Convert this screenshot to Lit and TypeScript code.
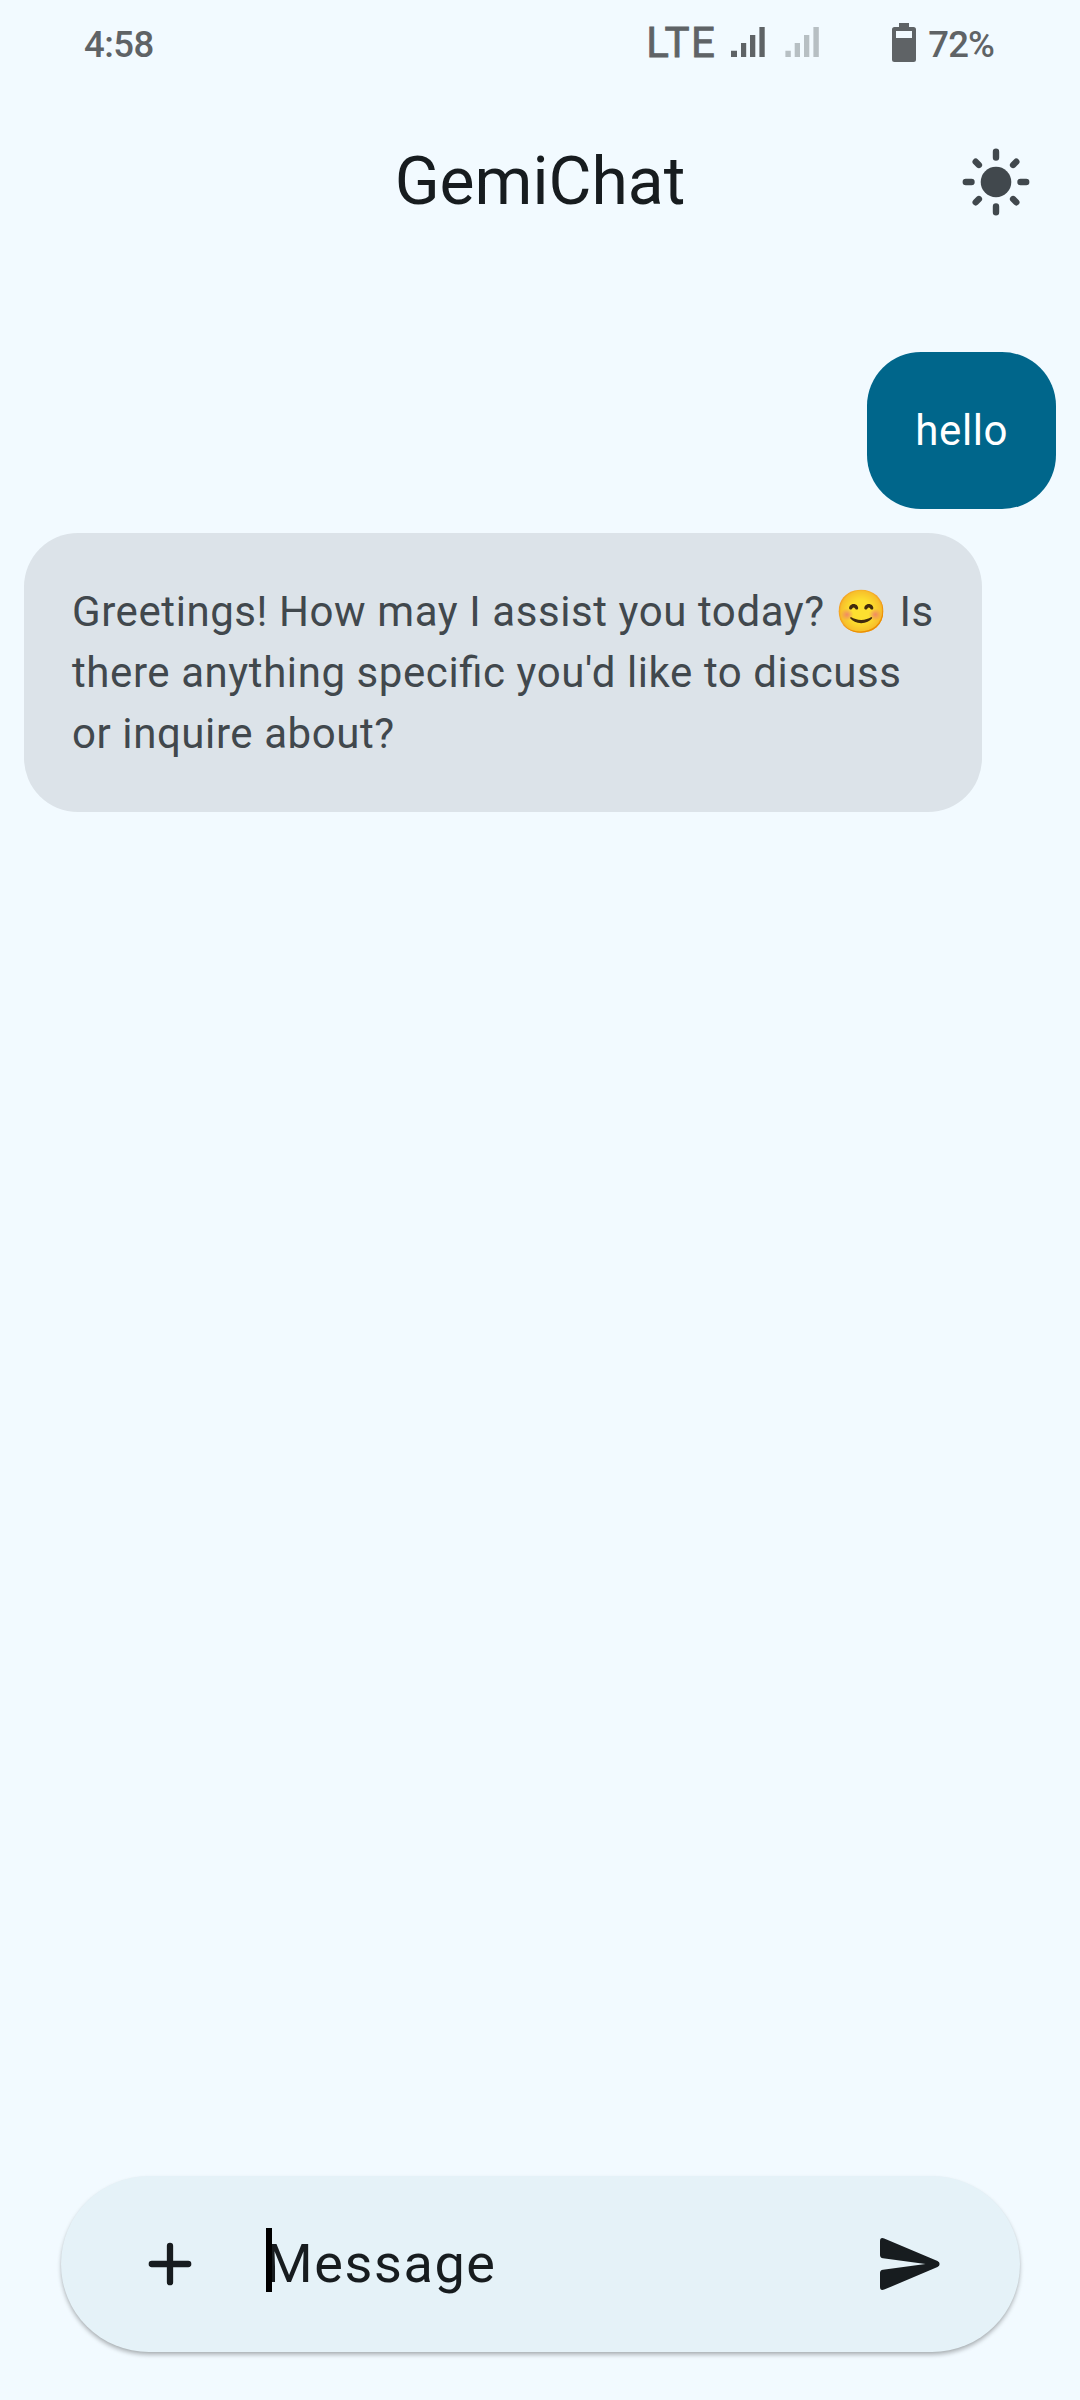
import { LitElement, html, css } from "lit";
import { customElement, property } from "lit/decorators.js";

@customElement("status-bar")
class StatusBar extends LitElement {
  static styles = css`
    :host {
      display: flex;
      height: 89px;
      padding: 0 86px 0 84px;
      justify-content: space-between;
      color: #5f6366;
      font-size: 36.5px;
      font-weight: 500;
      line-height: 89px;
    }
    .right {
      display: flex;
    }
    .time {
      letter-spacing: -0.5px;
    }
    .network {
      font-size: 42px;
      font-weight: 400;
      line-height: 85px;
      letter-spacing: 1.4px;
      -webkit-text-stroke: 0.8px #5f6366;
    }
    .icons {
      display: block;
      width: 201px;
      height: 89px;
      margin-left: 10px;
    }
    .level {
      margin-left: 1px;
      letter-spacing: -0.9px;
    }
  `;

  render() {
    return html`
      <span class="time">4:58</span>
      <div class="right">
        <span class="network">LTE</span>
        <svg class="icons" viewBox="726 0 201 89" fill="#5f6366">
          <path d="M731 50.7h6V57h-6zM741 43h5.2v14H741zM750 35h5.3v22H750zM759.4 27h5.3v30h-5.3z" />
          <path fill="#b7bfc3" d="M785.4 50.7h5.4V57h-5.4zM794.7 43h5.3v14h-5.3zM804 35h5.3v22H804zM813.4 27h5.4v30h-5.4z" />
          <path fill-rule="evenodd" d="M899 23h10v4h4.500q2.500 0 2.500 2.500v30q0 2.500-2.500 2.500h-19q-2.500 0-2.500-2.500v-30q0-2.500 2.500-2.500H899zM896 31v7h16v-7z" />
        </svg>
        <span class="level">72%</span>
      </div>
    `;
  }
}

@customElement("chat-header")
class ChatHeader extends LitElement {
  static styles = css`
    :host {
      display: grid;
      grid-template-columns: 1fr auto 1fr;
      align-items: center;
      height: 185px;
      padding: 0 44.5px;
      color: #171c1f;
    }
    .title {
      grid-column: 2;
      font-size: 66px;
      line-height: 84px;
    }
    .theme {
      display: block;
      justify-self: end;
      width: 80px;
      height: 80px;
    }
  `;

  render() {
    return html`
      <span class="title">GemiChat</span>
      <svg class="theme" viewBox="-40 -40 80 80" stroke="#41484d" stroke-width="6.400" stroke-linecap="round">
        <circle r="15.300" fill="#41484d" stroke="none" />
        <path d="M0-30.200v5.700M0 30.200v-5.700M-30.200 0h5.700M30.200 0h-5.700M-20.300-20.300l3.200 3.200M20.300-20.300l-3.200 3.200M-20.300 20.300l3.200-3.200M20.300 20.300l-3.200-3.200" />
      </svg>
    `;
  }
}

@customElement("chat-bubble")
class ChatBubble extends LitElement {
  static styles = css`
    :host {
      display: block;
      box-sizing: border-box;
      max-width: 970px;
      padding: 48px;
      border-radius: 54px;
      background: #dce3e9;
      color: #41484d;
      align-self: flex-start;
      font-size: 42px;
      line-height: 61px;
      letter-spacing: 0.58px;
      font-feature-settings: "liga" 1;
      white-space: pre-line;
    }
    :host([own]) {
      align-self: flex-end;
      background: #00668b;
      color: #ffffff;
    }
  `;

  @property({ type: Boolean, reflect: true }) own = false;

  render() {
    return html`<slot></slot>`;
  }
}

@customElement("message-input")
class MessageInput extends LitElement {
  static styles = css`
    :host {
      display: flex;
      align-items: center;
      box-sizing: border-box;
      height: 176px;
      margin: 0 60.5px 48px 60.5px;
      padding: 0 69.5px 0 79px;
      border-radius: 88px;
      background: #e5f2f8;
      color: #171c1f;
      box-shadow: 0 3px 4px rgba(0, 0, 0, 0.26), 0 1px 2px rgba(0, 0, 0, 0.05);
    }
    .add {
      width: 60px;
      height: 60px;
    }
    .field {
      position: relative;
      flex: 1;
      margin-left: 66px;
      font-size: 54px;
      line-height: 64px;
      letter-spacing: 1.6px;
    }
    .caret {
      position: absolute;
      left: 0;
      top: -4px;
      width: 6px;
      height: 64px;
      background: #000000;
    }
    .send {
      width: 80px;
      height: 80px;
    }
  `;

  render() {
    return html`
      <svg class="add" viewBox="-30 -30 60 60" stroke="#171c1f" stroke-width="6.300" stroke-linecap="round">
        <path d="M-18.200 0h36.400M0-18.200v36.400" />
      </svg>
      <div class="field"><span class="caret"></span>Message</div>
      <svg class="send" viewBox="870 2224.500 80 80" fill="#171c1f">
        <path d="M880 2241.700Q880 2237.400 884.200 2238.900L937.500 2261.400Q939.600 2262.500 939.600 2264.500Q939.600 2266.500 937.500 2267.600L884.200 2290.100Q880 2291.600 880 2287.300V2273.500Q880 2270.600 883 2270.200L925.500 2264.500L883 2258.800Q880 2258.400 880 2255.500Z" />
      </svg>
    `;
  }
}

@customElement("app-root")
class AppRoot extends LitElement {
  static styles = css`
    :host {
      display: flex;
      flex-direction: column;
      width: 1080px;
      height: 2400px;
      overflow: hidden;
      background: #f2faff;
      font-family: Roboto, "Noto Color Emoji", sans-serif;
    }
    .messages {
      display: flex;
      flex: 1;
      flex-direction: column;
      gap: 24px;
      padding: 78px 24px 0;
    }
  `;

  render() {
    return html`
      <status-bar></status-bar>
      <chat-header></chat-header>
      <main class="messages">
        <chat-bubble own>hello</chat-bubble>
        <chat-bubble>Greetings! How may I assist you today? 😊 Is
there anything specific you'd like to discuss
or inquire about?</chat-bubble>
      </main>
      <message-input></message-input>
    `;
  }
}
